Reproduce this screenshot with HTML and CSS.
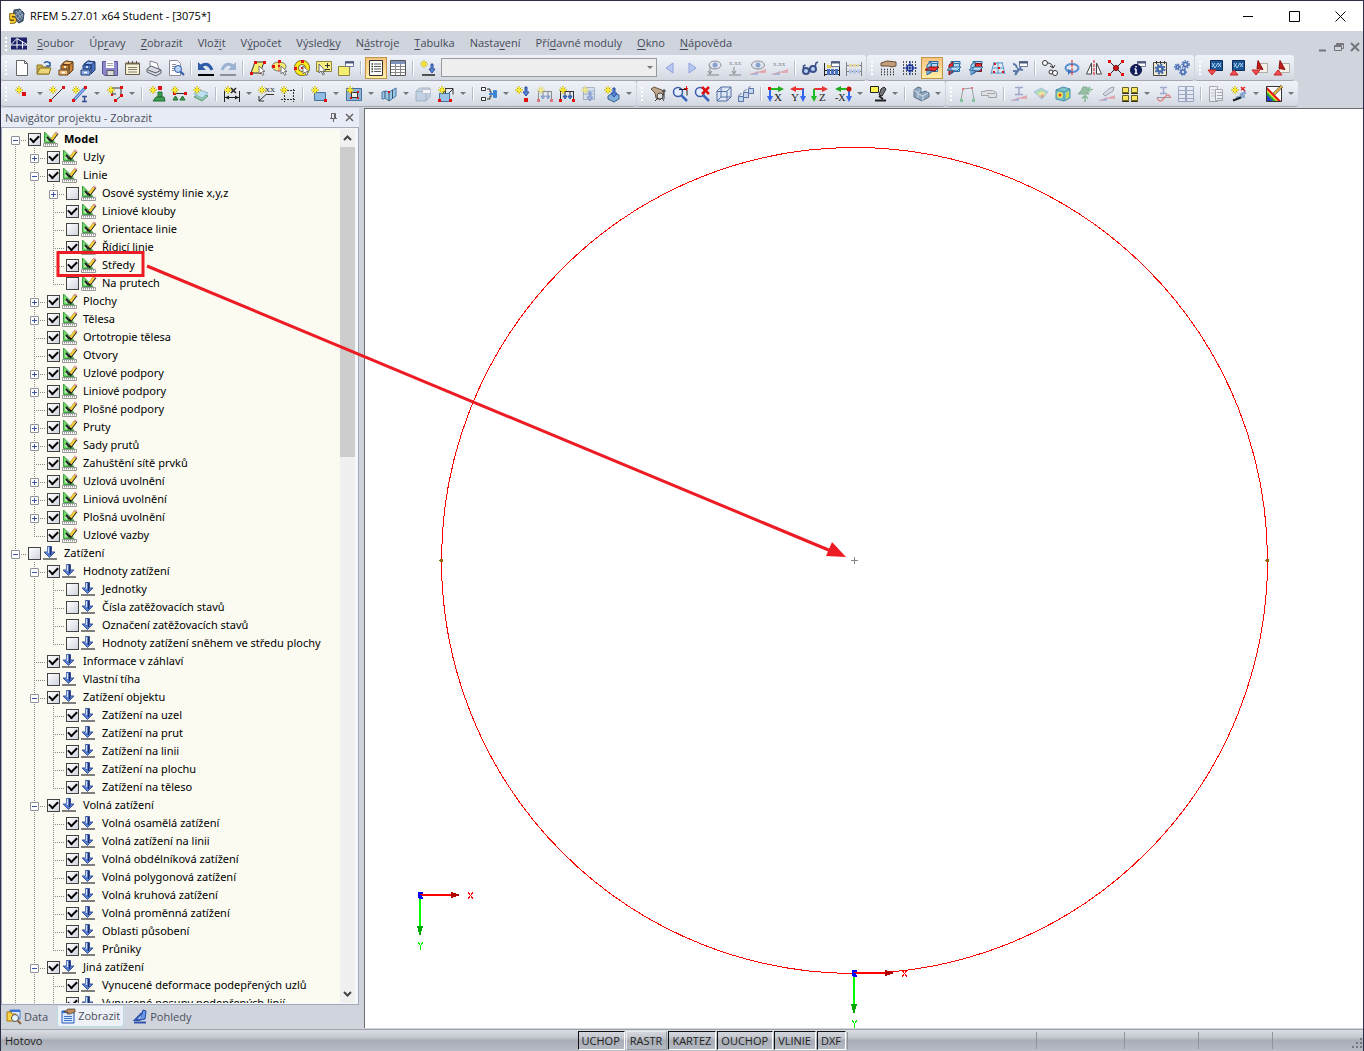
FILE: index.html
```html
<!DOCTYPE html>
<html lang="cs">
<head>
  <meta charset="UTF-8">
  <title>RFEM 5.27.01 x64 Student - [3075*]</title>
  <link rel="stylesheet" href="styles.css">
</head>
<body>

<header class="titlebar">
  <svg class="app-icon" viewBox="0 0 16 16">
    <path d="M5 2l6-1 4 4-1 8-4 2-6-5z" fill="#536783" stroke="#34435a"/>
    <path d="M7 3l6 8M10 2l4 7M5 6l6 7M6 8l7-6M8 11l6-5" stroke="#9cb0c8" fill="none"/>
    <path d="M6 7H2v3.500h2.500q1.500 0 1.500 1.700T4 14H1" stroke="#6e5400" stroke-width="3.500" fill="none"/>
    <path d="M6 7H2v3.500h2.500q1.500 0 1.500 1.700T4 14H1" stroke="#f5c634" stroke-width="1.800" fill="none"/>
  </svg>
  <h1>RFEM 5.27.01 x64 Student - [3075*]</h1>
  <div class="window-buttons">
    <button aria-label="Minimalizovat"><svg viewBox="0 0 11 11"><path d="M0 5.500h10"/></svg></button>
    <button aria-label="Maximalizovat"><svg viewBox="0 0 11 11"><path d="M.5.5h10v10H.5z"/></svg></button>
    <button aria-label="Zavřít"><svg viewBox="0 0 11 11"><path d="M.5.5l10 10M10.500.5l-10 10"/></svg></button>
  </div>
</header>

<nav class="menubar">
  <span class="grip"></span>
  <svg class="doc-icon" viewBox="0 0 16 12">
    <path d="M0 0h16v12H0z" fill="#1d2268"/>
    <path d="M0 7.500h16M6 1v10M11.500 4v7M6 1L0 7M6 1l10 6" stroke="#fff" fill="none"/>
  </svg>
  <button><u>S</u>oubor</button>
  <button>Úp<u>r</u>avy</button>
  <button><u>Z</u>obrazit</button>
  <button>Vlož<u>i</u>t</button>
  <button>V<u>ý</u>počet</button>
  <button>Výsled<u>k</u>y</button>
  <button>N<u>á</u>stroje</button>
  <button><u>T</u>abulka</button>
  <button>Nasta<u>v</u>ení</button>
  <button>Pří<u>d</u>avné moduly</button>
  <button><u>O</u>kno</button>
  <button><u>N</u>ápověda</button>
  <div class="doc-buttons">
    <button aria-label="Minimalizovat okno"><svg viewBox="0 0 10 10"><path d="M1 8.500h7" stroke-width="2"/></svg></button>
    <button aria-label="Obnovit okno"><svg viewBox="0 0 10 10"><path d="M2.500 3V1.500h7v5H8M.5 3.500h7v5h-7zM.5 4.500h7M3 2.500h6"/></svg></button>
    <button aria-label="Zavřít okno"><svg viewBox="0 0 10 10"><path d="M1 1l8 8M9 1L1 9" stroke-width="2"/></svg></button>
  </div>
</nav>

<div class="toolbar-row" id="toolbarTop"></div>
<div class="toolbar-row" id="toolbarBottom"></div>

<main class="workspace">
  <aside class="navigator">
    <div class="navigator-head">
      <h2>Navigátor projektu - Zobrazit</h2>
      <button aria-label="Připnout"><svg viewBox="0 0 9 9"><path d="M2.500 5V.5h4V5M5.500 1v4M1 5.500h7M4.500 6v3"/></svg></button>
      <button aria-label="Zavřít navigátor"><svg viewBox="0 0 9 9"><path d="M1 1l7 7M8 1L1 8" stroke-width="1.500"/></svg></button>
    </div>
    <div class="navigator-body">
      <ul class="tree" id="tree"></ul>
      <div class="scrollbar">
        <button aria-label="Nahoru"><svg viewBox="0 0 9 6"><path d="M1 5l3.500-3.500L8 5"/></svg></button>
        <div class="track"><div class="thumb"></div></div>
        <button aria-label="Dolů"><svg viewBox="0 0 9 6"><path d="M1 1l3.500 3.500L8 1"/></svg></button>
      </div>
    </div>
    <div class="tabs">
      <button class="tab">
        <svg viewBox="0 0 16 16">
          <path d="M4 1h10v9H4z" fill="#dfeaff" stroke="#4978cc"/><path d="M4 1h10v2H4z" fill="#3b73d6"/>
          <path d="M1 3h4l1 2h4v7H1z" fill="#ffd34a" stroke="#a97a00"/>
          <circle cx="9" cy="9" r="3.500" fill="#e9f5ff" stroke="#555"/><path d="M11.500 11.500L15 15" stroke="#8b6336" stroke-width="2"/>
        </svg>Data
      </button>
      <button class="tab active">
        <svg viewBox="0 0 16 16">
          <path d="M2 3h12v12H2z" fill="#dbe9ff" stroke="#2559b5"/><path d="M2 3h12v2H2z" fill="#2e69cc"/>
          <path d="M4 8.500h8M4 10.500h8M4 12.500h8" stroke="#3b6fc4"/>
          <path d="M4 4l4-3 7 0v3l-5 2H7l1-2z" fill="#b98a62" stroke="#543720" stroke-width=".7"/>
        </svg>Zobrazit
      </button>
      <button class="tab">
        <svg viewBox="0 0 16 16">
          <path d="M11 1l3 1-1 8-5 1z" fill="#6c98ee" stroke="#2146a0"/><path d="M10 4l-7 7h5M2 13.500h12" fill="#b8cdf5" stroke="#2f55ad" stroke-width="2"/>
        </svg>Pohledy
      </button>
    </div>
  </aside>

  <section class="model-view">
    <svg viewBox="0 0 998 919" preserveAspectRatio="xMinYMin">
      <circle class="model-line" cx="489.500" cy="451.500" r="413"/>
      <path class="model-center" d="M486 451.500h7M489.500 448v7"/>
      <g class="model-node"><circle cx="76.500" cy="451.500" r="2"/><circle cx="902.500" cy="451.500" r="2"/></g>
      <g id="axes">
        <path d="M55 786h32" stroke="#f00" stroke-width="2"/>
        <path d="M86 783l10 3-10 3z" fill="#b00000"/>
        <path d="M55 786v32" stroke="#0f0" stroke-width="2"/>
        <path d="M52 817h6l-3 11z" fill="#00a800"/>
        <path d="M53.500 783.500h4M53.500 783v6M53.500 786.500h3M53.500 788.500h4" stroke="#00f" stroke-width="2"/>
        <path d="M103 783l5 7M108 783l-5 7" stroke="#f00" fill="none"/>
        <path d="M53 833l2.500 3.500L58 833M55.500 836v5" stroke="#0e0" fill="none"/>
      </g>
      <use href="#axes" x="434" y="78"/>
    </svg>
  </section>
</main>

<footer class="statusbar">
  <span class="message">Hotovo</span>
  <button class="pressed">UCHOP</button>
  <button>RASTR</button>
  <button class="pressed">KARTEZ</button>
  <button class="pressed">OUCHOP</button>
  <button class="pressed">VLINIE</button>
  <button class="pressed">DXF</button>
  <span class="pane wide"></span>
  <span class="pane"></span>
  <span class="pane"></span>
  <span class="pane"></span>
  <span class="pane last">
    <svg viewBox="0 0 12 12"><path d="M9 1h2v2H9zM9 5h2v2H9zM9 9h2v2H9zM5 5h2v2H5zM5 9h2v2H5zM1 9h2v2H1z"/></svg>
  </span>
</footer>

<!-- callout over the tree and the model -->
<svg class="callout" viewBox="0 0 1364 1051">
  <path d="M58 252.500h85v23H58zM147 266l684 285"/>
  <path class="head" d="M846 557l-20-1 6-14z"/>
</svg>

<script src="script.js"></script>
</body>
</html>
```

FILE: styles.css
```css
* {
  box-sizing: border-box;
}
body {
  margin: 0;
  height: 100vh;
  display: flex;
  flex-direction: column;
  overflow: hidden;
  position: relative;
  font: 11px/18px "Open Sans", "Noto Sans", sans-serif;
  color: #000;
  background: #d0d4dd;
  border: 1px solid #2e2e48;
  border-bottom: 0;
}
h1, h2 {
  margin: 0;
  font-size: 11px;
  font-weight: normal;
}
button {
  padding: 0;
  border: 0;
  background: none;
  font: inherit;
  color: inherit;
}
svg {
  display: block;
  flex: none;
}

/* title */
.titlebar {
  display: flex;
  align-items: center;
  height: 30px;
  background: #fff;
}
.app-icon {
  width: 16px;
  height: 16px;
  margin: 0 5px 0 8px;
}
.titlebar h1 {
  flex: 1;
}
.window-buttons {
  display: flex;
}
.window-buttons button {
  width: 46px;
  height: 30px;
  display: grid;
  place-items: center;
}
.window-buttons svg {
  width: 11px;
  height: 11px;
  fill: none;
  stroke: #000;
}

/* menu */
.menubar {
  display: flex;
  align-items: center;
  height: 24px;
  color: #454b59;
}
.menubar > button {
  padding: 0 7px 0 8px;
}
.menubar u {
  text-underline-offset: 2px;
}
.doc-icon {
  width: 16px;
  height: 13px;
  margin-right: 2px;
}
.doc-buttons {
  display: flex;
  align-items: center;
  align-self: flex-end;
  margin-left: auto;
}
.doc-buttons button {
  width: 16px;
  height: 16px;
  display: grid;
  place-items: center;
}
.doc-buttons svg {
  width: 10px;
  height: 10px;
  fill: none;
  stroke: #74767c;
}
.grip {
  flex: none;
  width: 10px;
  height: 15px;
  background: repeating-linear-gradient(#fff 0 2px, transparent 2px 4px) 4px 1px / 2px 14px no-repeat;
}

/* toolbars */
.toolbar-row {
  display: flex;
  height: 26px;
  gap: 1px;
}
.toolbar {
  display: flex;
  align-items: center;
  height: 26px;
  padding-right: 1px;
  border-radius: 3px;
  border-bottom: 1px solid #a4a7b0;
  background: linear-gradient(#eff2f8, #e3e7ef 50%, #d3d7e0);
}
.tool {
  width: 22px;
  height: 22px;
  display: grid;
  place-items: center;
}
.tool svg {
  width: 16px;
  height: 16px;
  fill: none;
  overflow: visible;
}
.tool.active {
  border: 1px solid #c4934a;
  background: linear-gradient(#f7c47c, #fdd795 50%, #fff0a4);
}
.tool.off svg {
  opacity: 0.5;
}
.split {
  display: flex;
}
.split .tool {
  width: 23px;
}
.drop {
  width: 12px;
  display: grid;
  place-items: center;
}
.drop::after {
  content: "";
  border: 3px solid transparent;
  border-top-color: #777;
  border-bottom: 0;
}
.separator {
  width: 1px;
  height: 14px;
  margin: 0 4px 0 3px;
  background: #b9bdc7;
  box-shadow: 1px 0 #fff;
}
.combo {
  display: grid;
  align-items: center;
  margin: 0 2px;
}
.combo select {
  appearance: none;
  width: 216px;
  height: 19px;
  border: 1px solid #9a9a9a;
  border-radius: 0;
  background: #eee;
  opacity: 1;
  grid-area: 1 / 1;
}
.combo::after {
  content: "";
  z-index: 1;
  grid-area: 1 / 1;
  justify-self: end;
  margin-right: 4px;
  border: 3px solid transparent;
  border-top-color: #777;
  border-bottom: 0;
}

/* navigator */
.workspace {
  flex: 1;
  min-height: 0;
  display: flex;
  gap: 5px;
  padding-top: 1px;
}
.navigator {
  width: 358px;
  display: flex;
  flex-direction: column;
}
.navigator-head {
  display: flex;
  align-items: center;
  height: 20px;
  padding: 0 2px 0 4px;
  color: #4b505c;
  background: #e7ecf6;
  border-bottom: 1px solid #a7adba;
}
.navigator-head h2 {
  flex: 1;
}
.navigator-head button {
  width: 16px;
  height: 16px;
  display: grid;
  place-items: center;
}
.navigator-head svg {
  width: 9px;
  height: 9px;
  fill: none;
  stroke: #666;
}
.navigator-body {
  flex: 1;
  min-height: 0;
  display: flex;
  padding: 1px 3px 1px 1px;
  background: #f4f7fc;
  border: 1px solid #a1a8b7;
  border-top: 0;
}
.tree {
  flex: 1;
  overflow: hidden;
  margin: 0;
  padding: 1px 0 0 3px;
  font-family: "Noto Sans", "Open Sans", sans-serif;
  background: #fbfbf2;
}
.tree ul {
  margin: 0 0 0 19px;
  padding: 0;
}
.tree li {
  list-style: none;
  background: repeating-linear-gradient(#888 0 1px, transparent 1px 2px) 9px 0 / 1px 100% no-repeat;
}
.tree > li:first-child {
  background-position: 9px 10px;
}
.tree li:last-child:not(.more) {
  background-size: 1px 10px;
}
.row {
  display: flex;
  align-items: center;
  height: 18px;
}
.branch {
  width: 22px;
  height: 18px;
  padding: 6px 0 0 5px;
  background: repeating-linear-gradient(90deg, #888 0 1px, transparent 1px 2px) 9px 10px / 12px 1px no-repeat;
}
.toggle {
  display: block;
  width: 9px;
  height: 9px;
  border: 1px solid #8b909b;
  border-radius: 1px;
  background: linear-gradient(#3c55a5, #3c55a5) 1px 3px / 5px 1px no-repeat, #fff;
}
.toggle.closed {
  background: linear-gradient(#3c55a5, #3c55a5) 1px 3px / 5px 1px no-repeat, linear-gradient(#3c55a5, #3c55a5) 3px 1px / 1px 5px no-repeat, #fff;
}
.row label {
  display: flex;
  align-items: center;
  white-space: nowrap;
}
.row input {
  appearance: none;
  width: 13px;
  height: 13px;
  margin: 0 2px 0 0;
  display: grid;
  place-items: center;
  border: 1px solid #444;
  background: linear-gradient(135deg, #fff, #cfd4df);
}
.row input:checked::after {
  content: "";
  width: 7px;
  height: 4px;
  margin-bottom: 2px;
  border: solid #000;
  border-width: 0 0 2px 2px;
  transform: rotate(-45deg);
}
.row svg {
  width: 16px;
  height: 16px;
  margin-right: 5px;
  fill: none;
}
.row.strong {
  font-weight: bold;
}
.scrollbar {
  width: 15px;
  display: flex;
  flex-direction: column;
  background: #f0f0f0;
}
.scrollbar button {
  height: 18px;
  display: grid;
  place-items: center;
}
.scrollbar svg {
  width: 9px;
  height: 6px;
  fill: none;
  stroke: #444;
  stroke-width: 2;
}
.track {
  flex: 1;
}
.thumb {
  height: 37%;
  background: #cdcdcd;
}
.tabs {
  display: flex;
  height: 23px;
  padding: 1px 0 1px 3px;
  gap: 6px;
  color: #4b505c;
}
.tab {
  display: flex;
  align-items: center;
  gap: 2px;
  padding: 0 3px 0 2px;
}
.tab svg {
  width: 16px;
  height: 16px;
}
.tab.active {
  background: #eef1f6;
  border: 1px solid #b9dbe2;
  border-top: 0;
  border-radius: 0 0 3px 3px;
}

/* model */
.model-view {
  flex: 1;
  min-width: 0;
  background: #fff;
  border: solid #6d6d70;
  border-width: 1px 0 0 1px;
}
.model-view svg {
  width: 100%;
  height: 100%;
  shape-rendering: crispEdges;
}
.model-line {
  fill: none;
  stroke: #f00;
}
.model-center {
  stroke: #888;
}
.model-node {
  fill: #8a6a00;
}

/* status */
.statusbar {
  display: flex;
  align-items: center;
  height: 22px;
  margin-top: 1px;
  border-top: 1px solid #9da1aa;
  background: linear-gradient(#dadde3, #c4c7ce 35%, #a8adb6 50%, #b9bdc5);
  color: #222;
}
.message {
  flex: 1;
  padding-left: 4px;
}
.statusbar button {
  height: 19px;
  margin-right: 1px;
  padding: 0 4px 0 3px;
  line-height: 16px;
  border: 1px solid;
  border-color: #e8eaee #999da5 #999da5 #e8eaee;
}
.statusbar .pressed {
  border-color: #111 #fff #fff #111;
}
.pane {
  width: 74px;
  height: 17px;
  border-left: 1px solid #8f949d;
}
.pane:nth-last-child(4) {
  width: 88px;
}
.pane.wide {
  width: 189px;
}
.pane.last {
  width: 91px;
  display: flex;
  align-items: flex-end;
  justify-content: flex-end;
}
.pane svg {
  width: 12px;
  height: 12px;
  fill: #727780;
}

.callout {
  position: absolute;
  left: -1px;
  top: -1px;
  width: 1364px;
  height: 1051px;
  pointer-events: none;
  fill: none;
  stroke: #ed1c24;
  stroke-width: 3;
}
.callout .head {
  fill: #ed1c24;
  stroke: none;
}
```

FILE: script.js
```js
// small parts shared by more icons
const star = '<path d="M4 0v8M0 4h8M1.500 1.500l5 5M6.500 1.500l-5 5" stroke="#b5a400"/><path d="M4 1v6M1 4h6" stroke="#ffee30" stroke-width="1.500"/>';
const dot = (x, y, s = 3) => `<path d="M${x} ${y}h${s}v${s}h-${s}z" fill="#e01010"/>`;
const line = (d, c = '#333', w = 1) => `<path d="${d}" stroke="${c}" stroke-width="${w}"/>`;
const shape = (d, f, c = '#333') => `<path d="${d}" fill="${f}" stroke="${c}"/>`;
const cursor = shape('M9 6v8l2-2 1.500 3.500 1.500-1-1.500-3h2.500z', '#fff', '#777');
const lens = '<circle cx="6" cy="6" r="4.500" fill="#e4eeff" stroke="#3a5aa8" stroke-width="1.500"/>' + line('M9.500 9.500L15 15', '#3c66c2', 2.5);
const panel = shape('M7.500 1.500h8v5h-8z', '#fff', '#6b769a') + line('M7 2.500h9', '#4b5878', 2);
const letters = (x, y, t, s) => `<text x="${x}" y="${y}" font-family="Liberation Serif" font-size="${s}" fill="#222">${t}</text>`;
const arrowDown = (x, y, c = '#5a86d8') => shape(`M${x} ${y}v5h-2l3 4 3-4h-2v-5z`, c, '#2d50a3');
const loads = line('M1.500 5v9M14.500 5v9M1 5.500h14M6 5v5M11 5v5', '#333') + shape('M4 10h4l-2 3zM9 10h4l-2 3z', '#4675cc', '#2a55a8') + dot(0, 13) + dot(13, 13);
const beam = line('M4 1.500h8M8 1v8M4 8.500h8', '#5a6ab0', 1.5);
const redBlue = shape('M8 13h8V9z', '#ee7a80', 'none') + shape('M0 15h8v-4z', '#6a8fe0', 'none') + line('M0 14.500L16 10', '#d66');
const plane = (d, red) => shape(d, red ? '#ee2b2b' : '#b4d8f4', red ? '#7a1515' : '#2a6ca5');
const planes = red => plane('M5 4.500h9v-3H5z', false) + plane('M3 5l4-3v10l-4 3z', red === 2) +
  plane('M7.500 3.500h6v8h-6z', red === 1) + plane('M1 10l4-3h10l-4 4z', red === 0) + line('M5 7v7l4-3', '#2a6ca5');
const rfem = shape('M2.500.5h12v10h-12z', '#1d5796', '#0c2b5a') + line('M4 3l3 5 3-5 3 4M4 7l3-4M10 7l3-4', '#a9d4f8');
const cabinet = (light, mid, c) => shape('M4 4l4-3 7 1v8l-4 4V5z', mid, c) + shape('M4 4l4-3 7 1-4 3z', light, c) +
  shape('M3 5h8v4H3z', mid, c) + shape('M1 10h9v5H1z', light, c) + line('M6 7h2M4 12.500h3', '#fff', 1.5);

const icons = {
  new: shape('M2.500.5h8l3 3v12h-11z', '#fff', '#666') + line('M10.500.5v3h3', '#666'),
  open: shape('M1 14V5h5l1 2h6v7z', '#c9b04a', '#8c7524') + shape('M1 14l3-6h11l-2 6z', '#ecd67a', '#8c7524') + line('M8 3q4-3 6 1M14 2v4h-4', '#2d62a8', 1.5),
  project: cabinet('#f0bd79', '#c98435', '#5d3912'),
  projectBlue: cabinet('#8eb0ea', '#4a72c0', '#1c3872'),
  save: shape('M.5 1.500h15v14H3l-2.500-2z', '#8d88ca', '#5a529a') + shape('M4 1h8v7H4z', '#fff', 'none') + shape('M5 10.500h7v5H5z', '#ddd', '#555') + line('M5 3.500h6M5 5.500h6', '#aaa'),
  notes: shape('M1.500 3.500h14v11h-14z', '#f5f0d8', '#665a48') + line('M1.500 3.500h14', '#7a6a4c', 2) + line('M4 7.500h9M4 9.500h9M4 12h9', '#8a8474') + line('M4.500 1v3M8.500 1v3M12.500 1v3', '#555'),
  print: shape('M4 8V1l7 2 2 6z', '#fff', '#889') + shape('M1 9l4-3 10 4v3l-5 3-9-4z', '#d8dbe4', '#5b5f6c') + line('M2 10l8 3 5-3', '#555'),
  preview: shape('M1.500.5h8l3 3v12h-11z', '#fff', '#889') + line('M4 4.500h4M4 6.500h4M4 8.500h2M4 10.500h2', '#889') + '<circle cx="10" cy="9" r="3.500" fill="#b7d3f8" stroke="#2e5aa8"/>' + line('M12.500 11.500L16 15', '#2e5aa8', 2),
  undo: line('M3 6q7-5 11 4', '#2f5aa8', 3) + shape('M0 2v8h8z', '#2f5aa8', 'none') + line('M0 15h16', '#000', 2),
  redo: line('M13 6Q6 1 2 10', '#9bb2d2', 3) + shape('M16 2v8H8z', '#9bb2d2', 'none') + line('M0 15h16', '#8a8f9c', 2),
  selPoly: shape('M5 2h9l-4 11H1z', '#f6ee70', '#333') + dot(4, 1) + dot(13, 1) + dot(0, 12) + dot(9, 12, 2) + cursor,
  selEllipse: '<ellipse cx="7" cy="6.500" rx="7" ry="4.500" fill="#f6ee70" stroke="#776"/>' + line('M7 1v11', '#e66') + dot(6, 0) + dot(0, 5) + dot(6, 5, 2) + cursor,
  selRing: '<circle cx="8" cy="8" r="5.500" stroke="#6b5e00" stroke-width="5"/><circle cx="8" cy="8" r="5.500" stroke="#ffe820" stroke-width="3.500"/>' + dot(7, 0) + dot(0, 7) + dot(7, 7, 2) + cursor,
  selPlus: shape('M.5 1.500h15v10H.5z', '#f6ee80', '#8c8440') + line('M9 5.500h5M11.500 3v5M9 9.500h5') + shape('M3 4v9l2-2 2 4 1.500-1-2-3h3z', '#fff', '#666'),
  selWindow: shape('M.5 6.500h11v9H.5z', '#f6ee70', '#8c8440') + panel,
  navigator: shape('M1.500.5h13v15h-13z', '#fff', '#333') + line('M3.500 4h1.500M3.500 6.500h1.500M3.500 9h1.500M3.500 11.500h1.500', '#333', 1.5) + line('M6 4h7M6 6.500h7M6 9h7M6 11.500h7', '#555', 1),
  table: shape('M.5.5h15v15H.5z', '#fff', '#555') + line('M1 2.500h14', '#7c92b8', 3) + line('M1 6.500h14M1 9.500h14M1 12.500h14M5.500 4v11M10.500 4v11', '#888'),
  loadcase: star + arrowDown(11, 4) + line('M2 15h13', '#222', 1.5),
  prev: shape('M11 3v10L4 8z', '#b9c8ee', '#8fa3d8'),
  next: shape('M5 3v10l7-5z', '#b9c8ee', '#8fa3d8'),
  showLoad: '<ellipse cx="9" cy="5" rx="6" ry="4" fill="#dce6f5" stroke="#333"/><circle cx="9" cy="5" r="2.500" fill="#2f5cae"/>' + line('M4 6v8M2 11l2 3 2-3M1 15h12'),
  showValue: letters(1, 5, 'x.xx', 7) + line('M6 7v7M4 11l2 3 2-3M1 15h12'),
  showResult: '<ellipse cx="8" cy="5" rx="6.500" ry="4" fill="#dce6f5" stroke="#333"/><circle cx="8" cy="5" r="2.500" fill="#2f5cae"/>' + redBlue,
  resultValue: letters(1, 6, 'x.xx', 7) + redBlue,
  glasses: '<circle cx="4" cy="11" r="3" fill="#bcd3fa" stroke="#3a4f86" stroke-width="2"/><circle cx="11" cy="9" r="3" fill="#bcd3fa" stroke="#3a4f86" stroke-width="2"/>' + line('M1.500 9V6l2-1M13 7l1-4 2-1', '#3a4f86', 1.5),
  abacusWin: line('M.5 3v13M15.500 6v10M1 10.500h14M1 14.500h14', '#222') + line('M3 6.500h6', '#e7cb58', 3) + '<path d="M3 10.500h11M3 13.500h11" stroke="#4a72c0" stroke-width="3" stroke-dasharray="3 1"/>' + panel,
  abacus: line('M.5 2v14M15.500 2v14M1 5.500h14M1 11.500h14', '#222') + '<path d="M3 5.500h10" stroke="#e7cb58" stroke-width="3" stroke-dasharray="3 1"/><path d="M3 11.500h11" stroke="#8da8d8" stroke-width="4" stroke-dasharray="3 1"/>',
  gridHand: '<path d="M1 9.500h14M1 12h14M1 14.500h14" stroke="#333" stroke-width="1.500" stroke-dasharray="1 2"/>' + shape('M1 3l6-2 9 1v4l-5 1-2-1H4L1 6z', '#c39d7c', '#6b4c32'),
  grid: '<path d="M1 2h14M1 5h14M1 8h14M1 11h14M1 14h14" stroke="#222" stroke-width="1.500" stroke-dasharray="1 2"/><circle cx="8" cy="8" r="3" stroke="#16339a" stroke-width="1.500"/>' + line('M8 1v14M1 8h14', '#16339a'),
  planeXY: planes(0),
  planeYZ: planes(2),
  planeXZ: planes(1),
  mesh: line('M4 2L1 14M8 2v12M12 2l3 12M3 3h10M3 8h11M1 13h14', '#5b9ace') + dot(4, 3, 2) + dot(8, 7, 2) + dot(3, 11, 2) + dot(12, 11, 2),
  wrench: line('M3 15l6-8M1 11h3v4M1 4q3 0 4 4M5 9l6 1', '#5b7cab', 2) + panel,
  copyNodes: '<circle cx="3" cy="3" r="2.500" fill="#fff" stroke="#333"/><circle cx="9" cy="12" r="2" fill="#fff" stroke="#333"/><circle cx="13" cy="13" r="2.500" fill="#fff" stroke="#333"/>' + line('M6 3q4 0 5 5M8 6l3 2 2-3'),
  rotate: '<ellipse cx="8" cy="8" rx="6.500" ry="4" stroke="#5a8fd0" stroke-width="2"/><path d="M8 0v16" stroke="#d11" stroke-dasharray="3 1"/>' + shape('M4 9v6l4-4z', '#3672b8', 'none'),
  mirror: shape('M5.500 3v11H.5zM10.500 3v11h5z', '#fff', '#444') + '<path d="M8 0v16" stroke="#d11" stroke-dasharray="3 1"/>',
  connect: line('M2 2l12 12M14 2L2 14', '#222') + dot(0, 0) + dot(13, 0) + dot(0, 13) + dot(13, 13) + '<circle cx="8" cy="8" r="2.500" fill="#e01010" stroke="#600"/>',
  info: panel + '<circle cx="6" cy="10" r="5.500" fill="#111c5c" stroke="#0b1240"/>' + line('M6 9v5M4.500 9h1.500M4.500 13.500h3M6 6v1.500', '#fff', 1.5),
  settings: shape('M1.500 2.500h13v13h-13z', '#f3eed5', '#444') + line('M4.500 1v3M8.500 1v3M12.500 1v3', '#333') + '<circle cx="8" cy="9" r="2.500" stroke="#4569ac" stroke-width="2.500"/><circle cx="8" cy="9" r="4.500" stroke="#4569ac" stroke-width="2" stroke-dasharray="2 1.500"/>',
  gears: '<g stroke="#4a6fb4" stroke-width="1.500"><circle cx="3.500" cy="7" r="1.500"/><circle cx="11.500" cy="4.500" r="2"/><circle cx="9" cy="12" r="2"/></g><g stroke="#4a6fb4" stroke-width="1.500" stroke-dasharray="1.500 1"><circle cx="3.500" cy="7" r="2.700"/><circle cx="11.500" cy="4.500" r="3.500"/><circle cx="9" cy="12" r="3"/></g>',
  import: rfem + shape('M0 10h8l-4 5z', '#f05050', '#c22'),
  export: rfem + shape('M0 15h8l-4-5z', '#f05050', '#c22'),
  pdfImport: shape('M5.500 3.500h10v9h-10z', '#f6f1e8', '#b3aaa0') + shape('M6 .5l5 9-6-1z', '#c31b1b', '#8a1010') + shape('M0 10h8l-4 5z', '#f05050', '#c22'),
  pdfExport: shape('M5.500 3.500h10v9h-10z', '#f6f1e8', '#b3aaa0') + shape('M6 .5l5 9-6-1z', '#c31b1b', '#8a1010') + shape('M0 15h8l-4-5z', '#f05050', '#c22'),

  node: star + dot(7, 6, 4),
  member: line('M2 14L14 2', '#333') + dot(0, 13) + dot(13, 0) + star,
  memberType: line('M2 14L13 2', '#4b79c8', 3) + line('M2 14L13 2', '#b6d5ff') + dot(0, 13) + dot(12, 0) + star + line('M10 10.500h5M12.500 10v5M10 15.500h5', '#334a94', 1.5),
  polyline: line('M5 2h9v8l-6 5M5 2v6h4', '#333') + dot(13, 0) + dot(13, 8) + dot(7, 13) + dot(4, 8, 2) + star,
  support: dot(9, 0, 4) + shape('M9 6h4v5H9z', '#3ca052', '#216b32') + shape('M4 15l3-4h8l1 4z', '#3ca052', '#216b32') + star,
  lineSupport: line('M2 7.500h12') + dot(2, 6) + dot(13, 6) + shape('M2 14l2.500-4 2.500 4zM9 14l2.500-4 2.500 4z', '#3ca052', '#216b32') + star,
  surfaceSupport: shape('M1 11l6-4 8 3-6 5z', '#8fc6a5', '#5d9c7d') + shape('M1 8l6-4 8 3-6 5z', '#bfe0ef', '#8ab9cc') + star,
  dimension: line('M.5 5v11M15.500 5v11M1 11.500h14', '#222') + shape('M1 11.500l4-2v4zM15 11.500l-4-2v4z', '#222', 'none') + line('M7 2l5 5M12 2L7 7', '#222', 1.5) + star,
  comment: line('M1 15L8 8.500h8M1 15v-5M1 15h5') + letters(7, 6, 'XX', 7) + star,
  guides: '<path d="M4.500 3v13M13.500 3v13M1 4.500h15M1 13.500h15" stroke="#333" stroke-dasharray="2 1"/>' + star,
  surface: shape('M3.500 6.500h11v8h-11z', '#8fbbe2', '#45729e') + dot(13, 13) + star,
  opening: shape('M.5 2.500h15v12H.5z', '#8fb4d6', '#45729e') + shape('M5.500 6.500h6v5h-6z', '#eee', '#333') + dot(4, 5, 2) + dot(11, 5, 2) + dot(4, 11, 2) + dot(11, 11, 2) + star,
  curved: shape('M1 6q4-2 7 0l7-4v8l-7 5q-3-4-7-2z', '#9cc8ea', '#4575a2') + line('M8 6v9M11.500 4v8M4 5v7', '#356') + dot(7, 5, 2),
  solid: shape('M1 5l4-3h10v9l-4 4H1z', '#a5bfda', '#6b87a5') + line('M1 5.500h10v9M11 6l4-4', '#6b87a5') + shape('M7.500 3.500h8v4h-8z', '#fff', '#99a'),
  solidNew: shape('M1.500 7.500h10v8h-10z', '#9cc2e8', '#45729e') + line('M8 2.500h7v6M7.500 2v5M11 7l4-4M5 7l3-4') + dot(0, 13) + dot(11, 13) + star,
  combine: shape('M.5 1.500h4v3h-4zM.5 11.500h4v3h-4z', '#fff', '#333') + line('M6 3h3v3h2M6 13h3v-3h2') + shape('M15.500 4.500v7h-3v-7z', '#3d87d7', '#3d87d7') + line('M8 8h6', '#3d87d7', 2),
  nodalLoad: star + arrowDown(10, 1) + dot(9, 12, 4),
  memberLoad: loads + star,
  surfaceLoad: loads + star,
  lineLoad: shape('M2.500 1.500h11v12h-11z', '#c9dcf0', '#67809d') + line('M3 5h10M3 8h10', '#67809d') + arrowDown(8, 6) + star,
  solidLoad: shape('M4 10l5-3 6 2v4l-5 3-6-3z', '#82b0de', '#37628f') + arrowDown(9, 2) + star,
  pan: shape('M1 3l3-2 8 3 2 4-4 6-4-2-1-5z', '#c0a68b', '#6a5642') + '<circle cx="10" cy="10" r="3" fill="#ddd" stroke="#444"/>' + line('M14 3v10M12 5h4M5 15l3-3M14 15l-2-3', '#333'),
  zoom: lens + line('M7 3.500h8v6', '#222') + line('M14.500 0v5M12 2.500h4', '#e01010'),
  zoomOut: lens + line('M8 1l7 7M15 1L8 8', '#e01010', 2.5),
  wire: shape('M1 5l4-4h10v10l-4 4H1z', '#dbe5f6', '#5570a0') + line('M1 5.500h10v9M11 5l4-4M5 1v10h10M5 11l-4 4', '#5570a0'),
  layers: ['M.5 10.500h5v5h-5z', 'M5.500 6.500h5v5h-5z', 'M10.500 2.500h5v5h-5z'].map(d => shape(d, '#c6d5ef', '#5a74a6')).join('') + line('M.5 10l3-3M5.500 6l3-3M10.500 2l2-2', '#5a74a6'),
  viewX: line('M2 3h10', '#2b2', 2) + shape('M10 0l6 3-6 3z', '#2a2', 'none') + line('M2 3v9', '#36e', 2) + shape('M-1 10h6l-3 6z', '#36e', 'none') + letters(6, 15, 'X', 11) + dot(0, 1),
  viewY: line('M5 3h9', '#e33', 2) + shape('M6 0L0 3l6 3z', '#e33', 'none') + line('M13 3v9', '#36e', 2) + shape('M10 10h6l-3 6z', '#36e', 'none') + letters(1, 15, 'Y', 11),
  viewZ: line('M2 3h10', '#e33', 2) + shape('M10 0l6 3-6 3z', '#e33', 'none') + line('M2 3v9', '#2b2', 2) + shape('M-1 10h6l-3 6z', '#2b2', 'none') + letters(7, 15, 'Z', 11),
  viewMinusX: line('M5 3h8', '#2b2', 2) + shape('M6 0L0 3l6 3z', '#2a2', 'none') + line('M14 3v9', '#36e', 2) + shape('M11 10h6l-3 6z', '#36e', 'none') + letters(0, 15, '-X', 10) + '<circle cx="14" cy="3" r="2.500" fill="#c11"/>',
  projector: shape('M.5.5h8v6h-8z', '#fff352', '#222') + shape('M11 3l3-2 2 2-4 7-3-1z', '#777', '#222') + line('M5 14.500h11M9 10l4 3', '#222', 2),
  block: shape('M1 4l4-3 3 1v5l4-2 4 2v4l-7 4-8-4z', '#8da5bc', '#5b7084') + line('M1 4.500l4 2 3-3M5 6v6M5 8l5 2 5-3M10 10v5', '#d0deea'),
  frame: line('M2 14L4 3l9-1 2 12', '#555') + dot(3, 2, 2) + dot(12, 1, 2) + '<path d="M1 13h3v3H1zM13 13h3v3h-3z" fill="#3a5"/>',
  section: shape('M.5 5.500h4v-1h7l4 2v5h-8v-2h-7z', '#ddd', '#666') + line('M6 7.500h8', '#666'),
  deform: beam + redBlue,
  stress: shape('M1 6l7-4 7 4-6 7z', '#6fd088', '#6b97dc') + shape('M4 8l5-3 4 3-4 3z', '#f3e04c', 'none') + shape('M7 10l3-2 1 2-2 2z', '#e05a3a', 'none'),
  cube: shape('M1 4l7-3 7 2v9l-6 3-8-2z', '#7cc7cc', '#4a8fa6') + line('M1 4l8 2v9M9 6l6-3', '#4a8fa6') + '<circle cx="5" cy="9" r="3" fill="#f4e54c"/><circle cx="5" cy="9" r="1.500" fill="#e0452c"/>' + shape('M11 7l3-2v6l-3 2z', '#c9d84a', 'none'),
  reactions: shape('M6 1h4v4l2 3H1l3-3z', '#4a9a5c', '#2d6e3c') + line('M8 10v6M5 12.500l3-3 3 3M16 3.500h-5M13 1l-2.500 2.500L13 6', '#2c8f42', 1.5),
  brush: shape('M4 8l7-6 4-1-1 4-8 5z', '#ccd3dd', '#556') + redBlue,
  colors: ['M.5 1.500h6v5h-6z', 'M9.500 1.500h6v5h-6z', 'M.5 9.500h6v5h-6z', 'M9.500 9.500h6v5h-6z'].map(d => shape(d, '#f6e660', '#6b6020')).join('') + line('M0 7.500h7M9 7.500h7M0 15.500h7M9 15.500h7', '#3a3410'),
  curve: line('M4 1.500h7M7.500 1v6M4 7.500h7', '#5a6ab0', 1.5) + line('M1 11.500h14', '#445') + line('M1 12q3 6 7 0t7 0', '#d33', 1.5),
  tables: shape('M.5.5h15v15H.5z', '#e8edf7', '#5b6b9b') + line('M1 4.500h14M1 8.500h14M1 12.500h14', '#5b6b9b') + line('M8 1v14', '#5b6b9b', 2),
  report: shape('M1.500.5h8v15h-8z', '#f5f7fb', '#666') + line('M3 4h5M3 7h5M3 10h5', '#999') + shape('M7.500 3.500h7v11h-7z', '#fff', '#667') + line('M9 6.500h5M9 9.500h5M9 12.500h5', '#667'),
  airbrush: line('M9 9l6-3M5 12l9-2', '#8aa6cc', 3) + line('M2 14.500l8-3', '#222', 2) + line('M10 4l4-3M10 1l4 4', '#d22', 1.5) + star,
  rainbow: shape('M.5.5h15v15H.5z', '#fff', '#333') + shape('M1 8l7 7H1z', '#2a3bd0', 'none') + shape('M1 5v4l6 6h4z', '#22b03a', 'none') + shape('M1 3v3l9 9h3z', '#f3e62c', 'none') + shape('M1 1v3l11 11h3z', '#e01414', 'none') + line('M8 8l8-8', '#333', 3) + line('M8 8l8-8', '#e8b848', 2)
};

const svg = name => `<svg viewBox="0 0 16 16">${icons[name]}</svg>`;

// "|" separator, ">" drop-down arrow, "*" pressed, "-" greyed, "combo" load case list
function buildToolbar(list) {
  const items = list.split(' ').map(item => {
    if (item === '|') return '<span class="separator"></span>';
    if (item === 'combo') return '<span class="combo"><select aria-label="Zatěžovací stav" disabled></select></span>';
    const name = item.replace(/[>*-]/g, '');
    const state = item.includes('*') ? ' active' : item.includes('-') ? ' off' : '';
    const button = `<button class="tool${state}" aria-label="${name}">${svg(name)}</button>`;
    return item.includes('>') ? `<span class="split">${button}<button class="drop" aria-label="${name} další"></button></span>` : button;
  });
  return `<div class="toolbar"><span class="grip"></span>${items.join('')}</div>`;
}

document.getElementById('toolbarTop').innerHTML = [
  'new open project projectBlue save notes print preview | undo redo | selPoly selEllipse selRing selPlus selWindow | navigator* table | loadcase combo prev next showLoad- showValue- showResult- resultValue- | glasses abacusWin abacus-',
  'gridHand grid planeXY* planeYZ planeXZ mesh wrench | copyNodes rotate mirror connect info settings gears',
  'import export pdfImport pdfExport'
].map(buildToolbar).join('');

document.getElementById('toolbarBottom').innerHTML = [
  'node> member memberType> polyline> | support lineSupport surfaceSupport | dimension> comment guides | surface> opening> curved> solid- solidNew> | combine> nodalLoad memberLoad- surfaceLoad lineLoad- solidLoad>',
  'pan zoom zoomOut wire layers | viewX viewY viewZ viewMinusX> projector> | block>',
  'frame- section- | deform- stress- cube reactions- brush- colors> curve- tables- | report- airbrush> rainbow>'
].map(buildToolbar).join('');

const modelIcon = '<svg viewBox="0 0 16 16"><path d="M1.500 1v10.500H12z" fill="#6fdc68" stroke="#3f9a45"/><path d="M3.500 6.500v3h3z" fill="#fff"/><path d="M4 6l3.500 4" stroke="#222" stroke-width="2"/><path d="M7.500 10.500L14 2" stroke="#222" stroke-width="3.500"/><path d="M8.500 8.500L13 2.500" stroke="#f4cf3a" stroke-width="2.500"/><path d="M13 2.500L14 1" stroke="#e9a3b0" stroke-width="3"/><path d="M.5 12.500h14v3H.5z" fill="#fff" stroke="#999"/><path d="M2.500 13v1.500M4.500 13v1.500M6.500 13v1.500M8.500 13v1.500M10.500 13v1.500M12.500 13v1.500" stroke="#999"/></svg>';
const loadIcon = '<svg viewBox="0 0 16 16"><path d="M4.500 1.500h4V7h3.500L6.500 12.500 1 7h3.500z" fill="#5a80d4" stroke="#3a569c"/><path d="M5.500 2v6" stroke="#d0e0ff" stroke-width="1.500"/><path d="M7.500 2v8" stroke="#1d2f6e" stroke-width="1.500"/><path d="M0 14h14" stroke="#555" stroke-width="1.500"/></svg>';

// one line per item, two spaces per level: [+ closed, - open, . leaf][x ticked, o not ticked] label
const items = `
-x Model
  +x Uzly
  -x Linie
    +o Osové systémy linie x,y,z
    .x Liniové klouby
    .o Orientace linie
    .x Řídicí linie
    .x Středy
    .o Na prutech
  +x Plochy
  +x Tělesa
  .x Ortotropie tělesa
  .x Otvory
  +x Uzlové podpory
  +x Liniové podpory
  .x Plošné podpory
  +x Pruty
  +x Sady prutů
  .x Zahuštění sítě prvků
  +x Uzlová uvolnění
  +x Liniová uvolnění
  +x Plošná uvolnění
  .x Uzlové vazby
-o Zatížení
  -x Hodnoty zatížení
    .o Jednotky
    .o Čísla zatěžovacích stavů
    .o Označení zatěžovacích stavů
    .o Hodnoty zatížení sněhem ve středu plochy
  .x Informace v záhlaví
  .o Vlastní tíha
  -x Zatížení objektu
    .x Zatížení na uzel
    .x Zatížení na prut
    .x Zatížení na linii
    .x Zatížení na plochu
    .x Zatížení na těleso
  -x Volná zatížení
    .x Volná osamělá zatížení
    .x Volná zatížení na linii
    .x Volná obdélníková zatížení
    .x Volná polygonová zatížení
    .x Volná kruhová zatížení
    .x Volná proměnná zatížení
    .x Oblasti působení
    .x Průniky
  -x Jiná zatížení
    .x Vynucené deformace podepřených uzlů
    .x Vynucené posuny podepřených linií`;

const tree = document.getElementById('tree');
const parents = [tree];
let icon = modelIcon;

items.trim().split('\n').forEach(text => {
  const level = text.search(/\S/) / 2;
  const [kind, tick] = text.trim();
  const label = text.trim().slice(3);
  if (label === 'Zatížení') icon = loadIcon;

  const toggle = kind === '.' ? '' : `<button class="toggle ${kind === '+' ? 'closed' : ''}" aria-label="${label}"></button>`;
  const li = document.createElement('li');
  li.innerHTML = `<div class="row ${label === 'Model' ? 'strong' : ''}"><span class="branch">${toggle}</span>` +
    `<label><input type="checkbox" ${tick === 'x' ? 'checked' : ''}>${icon}${label}</label></div>`;
  if (kind === '-') {
    parents[level + 1] = document.createElement('ul');
    li.appendChild(parents[level + 1]);
  }
  parents[level].appendChild(li);
});

// the list goes on below the visible part
for (let li = tree.lastElementChild; li; li = li.querySelector(':scope > ul > li:last-child')) {
  li.classList.add('more');
}
```
